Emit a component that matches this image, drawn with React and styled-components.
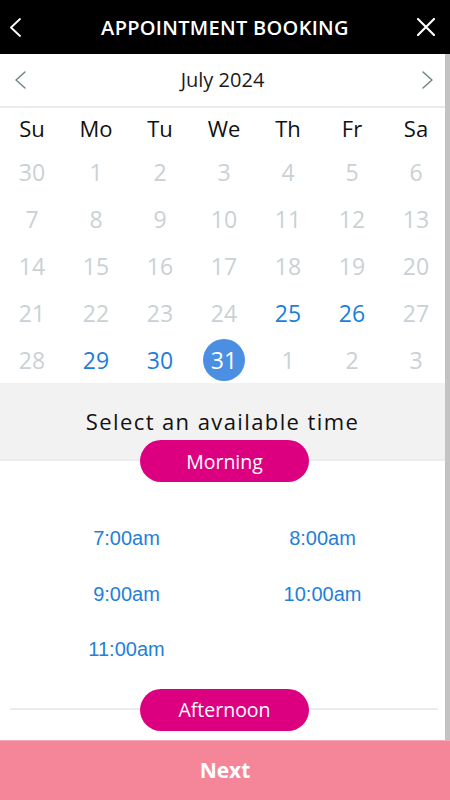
import React from "react";
import styled, { createGlobalStyle } from "styled-components";

const Global = createGlobalStyle`
  html, body { margin: 0; padding: 0; background: #fff; }
  body { font-family: "Open Sans", "Noto Sans", sans-serif; }
  * { box-sizing: border-box; }
`;

const Screen = styled.div`
  width: 450px;
  height: 800px;
  display: flex;
  flex-direction: column;
  overflow: hidden;
  background: #fff;
`;

const TopBar = styled.header`
  height: 54px;
  flex: 0 0 54px;
  background: #000;
  display: grid;
  grid-template-columns: 50px 1fr 50px;
  align-items: center;
`;

const IconButton = styled.button`
  border: 0;
  background: none;
  padding: ${(p) => p.$pad || "0"};
  height: ${(p) => p.$h || 54}px;
  display: flex;
  align-items: center;
  justify-content: ${(p) => p.$justify || "center"};
  cursor: pointer;
`;

const Title = styled.h1`
  margin: 0;
  text-align: center;
  color: #fff;
  font-family: "Open Sans", sans-serif;
  font-weight: 600;
  font-size: 20px;
  letter-spacing: 0.3px;
`;

const Body = styled.div`
  flex: 1;
  display: flex;
  border-right: 5px solid #c3c3c3;
  overflow: hidden;
`;

const Scroll = styled.div`
  flex: 1;
  display: flex;
  flex-direction: column;
  overflow: hidden;
`;

const MonthBar = styled.div`
  height: 54px;
  flex: 0 0 54px;
  display: grid;
  grid-template-columns: 40px 1fr 40px;
  align-items: center;
  border-bottom: 2px solid #e8ecef;
`;

const MonthLabel = styled.div`
  text-align: center;
  font-size: 20px;
  color: #1a1a1a;
  padding-bottom: 2px;
`;

const Grid = styled.div`
  display: grid;
  grid-template-columns: repeat(7, 64px);
  grid-auto-rows: 47px;
  grid-template-rows: 40px;
  align-items: center;
  justify-items: center;
`;

const Weekday = styled.div`
  font-size: 22px;
  color: #111;
`;

const Day = styled.div`
  width: 42px;
  height: 42px;
  border-radius: 50%;
  display: flex;
  align-items: center;
  justify-content: center;
  font-size: 23px;
  color: ${(p) =>
    p.$selected ? "#fff" : p.$available ? "#1a7fda" : "#c9d1d5"};
  background: ${(p) => (p.$selected ? "#4a8fe1" : "transparent")};
`;

const Band = styled.div`
  background: #f2f2f2;
  height: 57px;
  flex: 0 0 57px;
  display: flex;
  align-items: flex-end;
  justify-content: center;
  padding-bottom: 4px;
`;

const BandTitle = styled.div`
  font-size: 22px;
  letter-spacing: 1.4px;
  color: #111;
`;

const PillRow = styled.div`
  height: 42px;
  flex: 0 0 42px;
  display: flex;
  justify-content: center;
  position: relative;
  background: ${(p) =>
    p.$band
      ? "linear-gradient(#f2f2f2 0 19px, #e9edf0 19px 21px, #fff 21px)"
      : "#fff"};
  &::before {
    content: "";
    display: ${(p) => (p.$line ? "block" : "none")};
    position: absolute;
    left: 10px;
    right: 7px;
    top: 19px;
    height: 2px;
    background: #e8ecef;
  }
`;

const Pill = styled.div`
  position: relative;
  width: 169px;
  height: 42px;
  border-radius: 21px;
  background: #dc0080;
  color: #fff;
  font-size: 19.5px;
  display: flex;
  align-items: center;
  justify-content: center;
  margin-left: 4px;
`;

const Times = styled.div`
  display: grid;
  grid-template-columns: 196px 196px;
  grid-auto-rows: 55.5px;
  justify-content: center;
  align-items: center;
  justify-items: center;
  padding: 29px 0 11px 4px;
`;

const Time = styled.div`
  font-family: "Liberation Sans", Arial, sans-serif;
  font-size: 20px;
  color: #1f80da;
`;

const Footer = styled.button`
  flex: 0 0 60px;
  height: 60px;
  border: 0;
  border-top: 1px solid #f8a8b6;
  background: #f5869a;
  color: #fff;
  font-family: "Open Sans", sans-serif;
  font-weight: 700;
  font-size: 21px;
  display: flex;
  align-items: center;
  justify-content: center;
  padding: 0 0 1px;
`;

const Chevron = ({ dir = "left", color, w = 10, h = 18, sw = 1.6 }) => (
  <svg width={w + 2} height={h + 2} viewBox={`-1 -1 ${w + 2} ${h + 2}`} fill="none">
    <polyline
      points={dir === "left" ? `${w},0 0,${h / 2} ${w},${h}` : `0,0 ${w},${h / 2} 0,${h}`}
      stroke={color}
      strokeWidth={sw}
      strokeLinecap="round"
      strokeLinejoin="round"
    />
  </svg>
);

const CloseIcon = () => (
  <svg width="18" height="18" viewBox="0 0 18 18" fill="none">
    <path d="M1 1 L17 17 M17 1 L1 17" stroke="#fff" strokeWidth="2.2" strokeLinecap="round" />
  </svg>
);

const weekdays = ["Su", "Mo", "Tu", "We", "Th", "Fr", "Sa"];
const days = [
  30, 1, 2, 3, 4, 5, 6,
  7, 8, 9, 10, 11, 12, 13,
  14, 15, 16, 17, 18, 19, 20,
  21, 22, 23, 24, 25, 26, 27,
  28, 29, 30, 31, 1, 2, 3,
];
const available = new Set([25, 26, 29, 30]);
const times = ["7:00am", "8:00am", "9:00am", "10:00am", "11:00am"];

export default function App() {
  return (
    <>
      <Global />
      <Screen>
        <TopBar>
          <IconButton aria-label="Back" $justify="flex-start" $pad="0 0 0 10px">
            <Chevron dir="left" color="#fff" w={9} h={17} sw={1.8} />
          </IconButton>
          <Title>APPOINTMENT BOOKING</Title>
          <IconButton aria-label="Close" $justify="flex-end" $pad="0 15px 0 0">
            <CloseIcon />
          </IconButton>
        </TopBar>
        <Body>
          <Scroll>
            <MonthBar>
              <IconButton aria-label="Previous month" $h={52}>
                <Chevron dir="left" color="#6e7f86" w={9} h={16} sw={1.4} />
              </IconButton>
              <MonthLabel>July 2024</MonthLabel>
              <IconButton aria-label="Next month" $h={52} $pad="0 0 0 5px">
                <Chevron dir="right" color="#6e7f86" w={9} h={16} sw={1.4} />
              </IconButton>
            </MonthBar>
            <Grid>
              {weekdays.map((w) => (
                <Weekday key={w}>{w}</Weekday>
              ))}
              {days.map((d, i) => {
                const inMonth = i >= 1 && i <= 31;
                return (
                  <Day
                    key={i}
                    $available={inMonth && available.has(d)}
                    $selected={inMonth && d === 31}
                  >
                    {d}
                  </Day>
                );
              })}
            </Grid>
            <Band>
              <BandTitle>Select an available time</BandTitle>
            </Band>
            <PillRow $band>
              <Pill>Morning</Pill>
            </PillRow>
            <Times>
              {times.map((t) => (
                <Time key={t}>{t}</Time>
              ))}
            </Times>
            <PillRow $line>
              <Pill>Afternoon</Pill>
            </PillRow>
          </Scroll>
        </Body>
        <Footer>Next</Footer>
      </Screen>
    </>
  );
}
